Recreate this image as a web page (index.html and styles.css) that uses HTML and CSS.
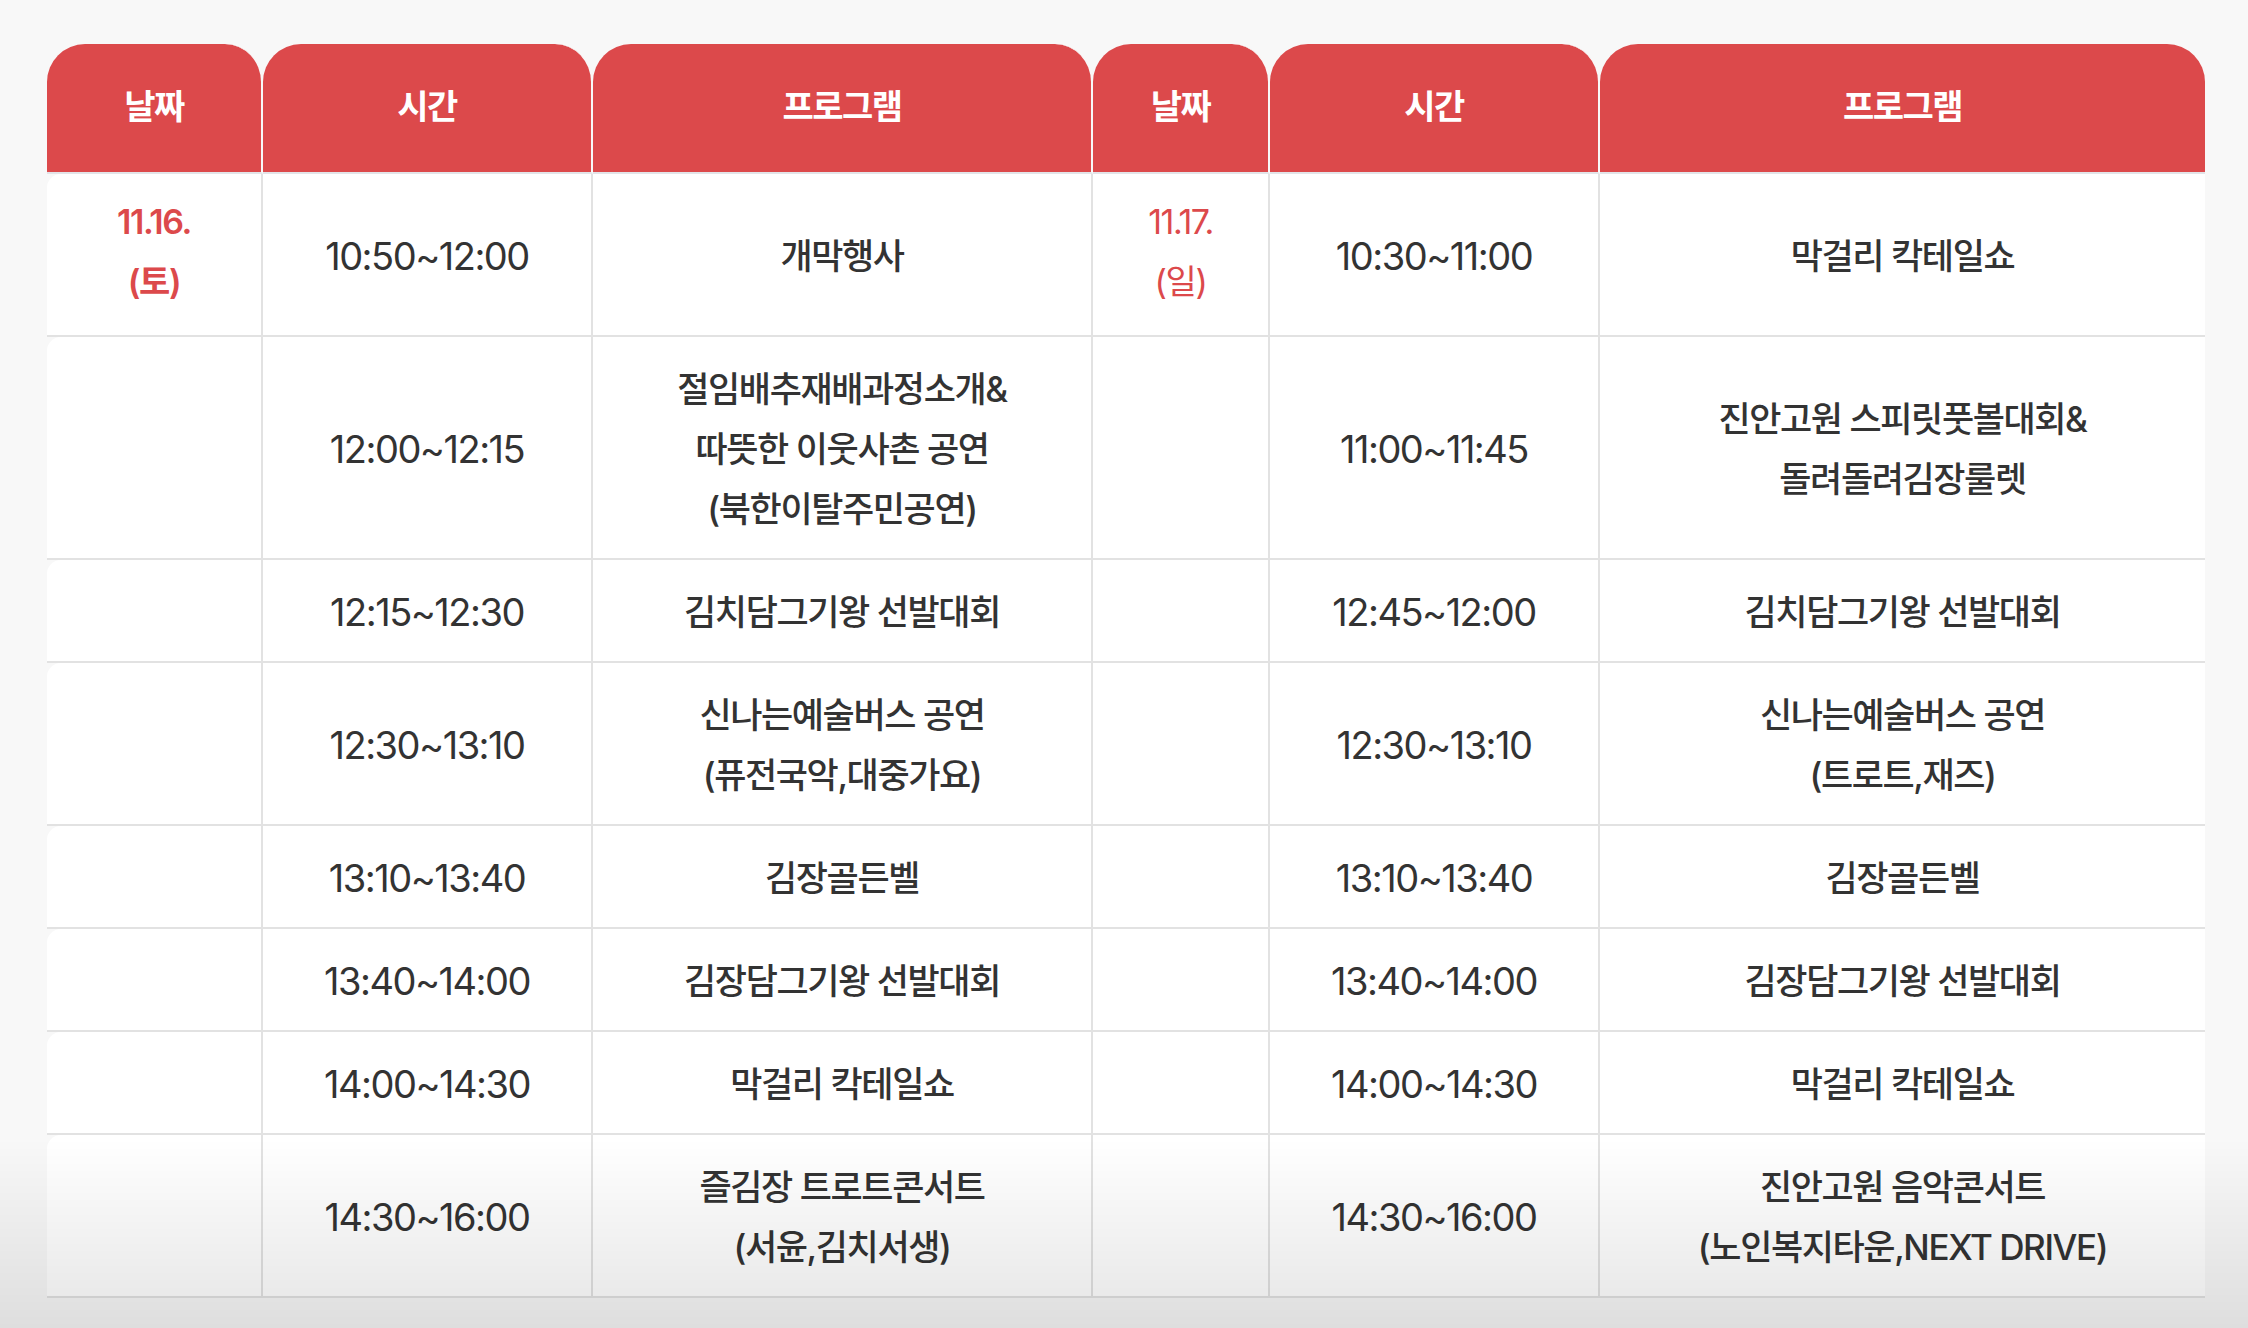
FILE: index.html
```html
<!DOCTYPE html>
<html lang="ko">
<head>
<meta charset="utf-8">
<title>행사 프로그램</title>
<link rel="stylesheet" href="styles.css">
</head>
<body>
<main class="page">
  <table class="schedule">
    <colgroup>
      <col class="c-date"><col class="c-time"><col class="c-prog">
      <col class="c-date2"><col class="c-time"><col class="c-prog2">
    </colgroup>
    <thead>
      <tr>
        <th>날짜</th><th>시간</th><th>프로그램</th>
        <th>날짜</th><th>시간</th><th class="last">프로그램</th>
      </tr>
    </thead>
    <tbody>
      <tr>
        <td class="date strong">11.16.<br>(토)</td>
        <td class="time">10:50~12:00</td>
        <td>개막행사</td>
        <td class="date">11.17.<br>(일)</td>
        <td class="time">10:30~11:00</td>
        <td class="last">막걸리 칵테일쇼</td>
      </tr>
      <tr>
        <td class="date"></td>
        <td class="time">12:00~12:15</td>
        <td>절임배추재배과정소개&amp;<br>따뜻한 이웃사촌 공연<br>(북한이탈주민공연)</td>
        <td></td>
        <td class="time">11:00~11:45</td>
        <td class="last">진안고원 스피릿풋볼대회&amp;<br>돌려돌려김장룰렛</td>
      </tr>
      <tr>
        <td class="date"></td>
        <td class="time">12:15~12:30</td>
        <td>김치담그기왕 선발대회</td>
        <td></td>
        <td class="time">12:45~12:00</td>
        <td class="last">김치담그기왕 선발대회</td>
      </tr>
      <tr>
        <td class="date"></td>
        <td class="time">12:30~13:10</td>
        <td>신나는예술버스 공연<br>(퓨전국악,대중가요)</td>
        <td></td>
        <td class="time">12:30~13:10</td>
        <td class="last">신나는예술버스 공연<br>(트로트,재즈)</td>
      </tr>
      <tr>
        <td class="date"></td>
        <td class="time">13:10~13:40</td>
        <td>김장골든벨</td>
        <td></td>
        <td class="time">13:10~13:40</td>
        <td class="last">김장골든벨</td>
      </tr>
      <tr>
        <td class="date"></td>
        <td class="time">13:40~14:00</td>
        <td>김장담그기왕 선발대회</td>
        <td></td>
        <td class="time">13:40~14:00</td>
        <td class="last">김장담그기왕 선발대회</td>
      </tr>
      <tr>
        <td class="date"></td>
        <td class="time">14:00~14:30</td>
        <td>막걸리 칵테일쇼</td>
        <td></td>
        <td class="time">14:00~14:30</td>
        <td class="last">막걸리 칵테일쇼</td>
      </tr>
      <tr>
        <td class="date"></td>
        <td class="time">14:30~16:00</td>
        <td>즐김장 트로트콘서트<br>(서윤,김치서생)</td>
        <td></td>
        <td class="time">14:30~16:00</td>
        <td class="last">진안고원 음악콘서트<br>(노인복지타운,NEXT DRIVE)</td>
      </tr>
    </tbody>
  </table>
</main>
</body>
</html>
```
FILE: styles.css
```css
html, body {
  margin: 0;
  padding: 0;
  background: #f8f8f8;
}

body {
  font-family: Inter, "Noto Sans CJK KR", sans-serif;
  color: #333333;
}

body::after {
  content: "";
  position: fixed;
  left: 0;
  right: 0;
  bottom: 0;
  height: 190px;
  background: linear-gradient(to bottom, rgba(0, 0, 0, 0) 0%, rgba(0, 0, 0, 0.1) 100%);
  pointer-events: none;
}

.page {
  padding: 44px 43px 40px 47px;
}

.schedule {
  width: 2158px;
  border-collapse: separate;
  border-spacing: 0;
  table-layout: fixed;
}

.c-date { width: 216px; }
.c-time { width: 330px; }
.c-prog { width: 500px; }
.c-date2 { width: 177px; }
.c-prog2 { width: 605px; }

.schedule th {
  height: 130px;
  padding: 0 0 8px;
  box-sizing: border-box;
  background: #dc494b;
  color: #ffffff;
  font-size: 34px;
  font-weight: 700;
  letter-spacing: -1.5px;
  text-align: center;
  border-radius: 38px 38px 0 0;
  border-right: 2px solid #f8f8f8;
  border-bottom: 2px solid #e2e4e8;
}

.schedule th.last {
  border-right: none;
}

.schedule td {
  padding: 22px 8px 19px;
  background: #ffffff;
  font-size: 35px;
  font-weight: 500;
  line-height: 60px;
  letter-spacing: -1.4px;
  text-align: center;
  vertical-align: middle;
  border-right: 2px solid #e2e2e2;
  border-bottom: 2px solid #e2e2e2;
}

.schedule td.time {
  font-size: 38px;
  font-weight: 400;
  letter-spacing: -1.5px;
}

.schedule td.last {
  border-right: none;
}

.schedule td:first-child {
  border-top-left-radius: 14px;
}

.schedule td.date {
  padding-top: 18px;
  padding-bottom: 23px;
  font-size: 34px;
  font-weight: 400;
  color: #dc494b;
}

.schedule td.strong {
  font-weight: 600;
}
```
